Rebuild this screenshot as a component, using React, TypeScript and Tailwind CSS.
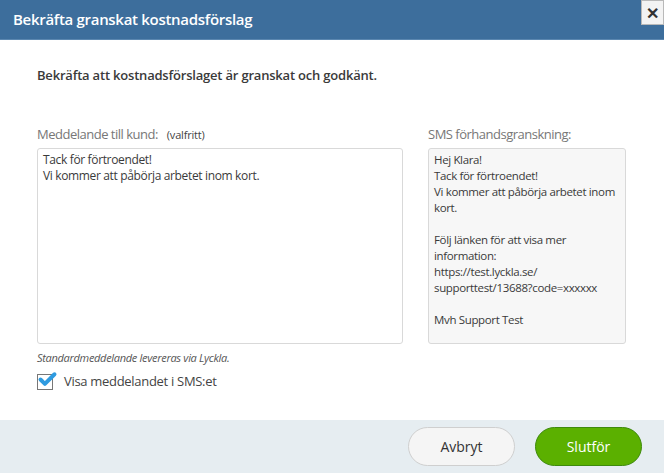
import { Check } from "lucide-react";

const font = { fontFamily: '"Segoe UI", "Open Sans", sans-serif' };

const smsLines = [
  "Hej Klara!",
  "Tack för förtroendet!",
  "Vi kommer att påbörja arbetet inom",
  "kort.",
  "",
  "Följ länken för att visa mer",
  "information:",
  "https://test.lyckla.se/",
  "supporttest/13688?code=xxxxxx",
  "",
  "Mvh Support Test",
];

export default function App() {
  return (
    <div className="w-[664px] h-[473px] bg-white flex flex-col text-[#333]" style={font}>
      {/* header */}
      <div className="relative h-[40px] bg-[#3d6e9c] border-b border-[#5b87b0] flex items-center pl-[13px]">
        <span className="text-white text-[15px] font-semibold tracking-[-0.3px]">Bekräfta granskat kostnadsförslag</span>
        <button className="absolute top-0 right-0 w-[23px] h-[25px] bg-[#f3f3f3] border border-[#b9b9b9] flex items-center justify-center text-[#333] text-[16px] font-semibold leading-none">
          ✕
        </button>
      </div>

      {/* body */}
      <div className="flex-1 px-[37px]">
        <p className="mt-[26px] text-[13px] font-semibold text-[#3a3a3a] tracking-[-0.2px]">
          Bekräfta att kostnadsförslaget är granskat och godkänt.
        </p>
        <div className="flex gap-[25px] mt-[40px]">
          <div className="w-[366px]">
            <div className="text-[13px] text-[#777] leading-[17px] tracking-[-0.5px]">
              Meddelande till kund:
              <span className="ml-[9px] text-[11px] text-[#444] tracking-[-0.2px]">(valfritt)</span>
            </div>
            <div className="mt-[5px] h-[196px] border border-[#d9d9d9] rounded-[3px] px-[5px] py-[3px] text-[12px] leading-[16px] text-[#3a3a3a] tracking-[-0.35px]">
              Tack för förtroendet!
              <br />
              Vi kommer att påbörja arbetet inom kort.
            </div>
          </div>
          <div className="w-[198px]">
            <div className="text-[13px] text-[#777] leading-[17px] tracking-[-0.5px]">SMS förhandsgranskning:</div>
            <div className="mt-[5px] h-[196px] border border-[#d9d9d9] rounded-[3px] bg-[#f7f7f7] px-[5px] py-[3px] text-[11.5px] leading-[16px] text-[#3a3a3a] tracking-[-0.35px]">
              {smsLines.map((line, i) => (
                <div key={i} className="h-[16px] whitespace-nowrap">
                  {line}
                </div>
              ))}
            </div>
          </div>
        </div>
        <p className="mt-[6px] text-[11px] italic text-[#555] tracking-[-0.3px]">Standardmeddelande levereras via Lyckla.</p>
        <label className="mt-[6px] flex items-center gap-[11px]">
          <span className="relative w-[16px] h-[16px] border border-[#777] bg-white">
            <Check className="absolute -top-[6px] -left-[1px] w-[21px] h-[21px] text-[#2f9be0]" strokeWidth={4.5} />
          </span>
          <span className="text-[13px] text-[#444] tracking-[-0.3px]">Visa meddelandet i SMS:et</span>
        </label>
      </div>

      {/* footer */}
      <div className="h-[53px] bg-[#e6edf1] flex items-center justify-end gap-[20px] pr-[22px]">
        <button className="w-[107px] h-[39px] rounded-full bg-[#f5f5f5] border border-[#cfcfcf] text-[14px] text-[#333]">
          Avbryt
        </button>
        <button className="w-[107px] h-[39px] rounded-full bg-[#5bb000] border border-[#3e8a0c] text-[14px] text-white">
          Slutför
        </button>
      </div>
    </div>
  );
}
